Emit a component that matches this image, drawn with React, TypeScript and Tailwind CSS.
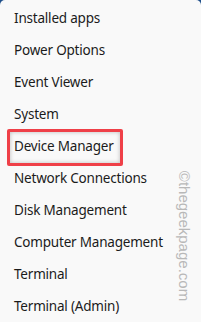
const items = [
  "Installed apps",
  "Power Options",
  "Event Viewer",
  "System",
  "Device Manager",
  "Network Connections",
  "Disk Management",
  "Computer Management",
  "Terminal",
  "Terminal (Admin)",
];

export default function App() {
  return (
    <div className="h-[322px] w-[201px] overflow-hidden bg-[#1f4f8a]">
      <div
        className="relative h-full w-full rounded-t-[5px] bg-[#f9f9f9] pt-[2px] text-[13.5px] text-[#1b1b1b]"
        style={{ fontFamily: '"Noto Sans", "Open Sans", sans-serif' }}
      >
        {items.map((label) => (
          <div key={label} className="flex h-[32px] items-center pl-[14px] tracking-[-0.2px]">
            {label}
          </div>
        ))}

        <div className="absolute left-[7px] top-[129px] h-[37px] w-[116px] rounded-[2px] border-[3px] border-[#ef4048] shadow-[inset_0_0_4px_rgba(0,0,0,0.25)]" />

        <div
          className="absolute left-[184px] top-[236px] -translate-x-1/2 -translate-y-1/2 rotate-90 whitespace-nowrap text-[15px] leading-none text-[#b8b8b8]"
          style={{ fontFamily: '"Liberation Sans", sans-serif' }}
        >
          ©thegeekpage.com
        </div>
      </div>
    </div>
  );
}
